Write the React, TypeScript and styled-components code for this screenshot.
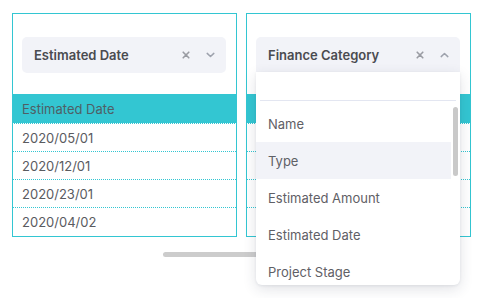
import styled, { createGlobalStyle } from "styled-components";

const GlobalStyle = createGlobalStyle`
  body {
    margin: 0;
    background: #ffffff;
    font-family: Inter, "Noto Sans", sans-serif;
  }
`;

const Page = styled.div`
  position: relative;
  width: 478px;
  height: 298px;
  padding: 13px 0 0 12px;
  box-sizing: border-box;
`;

const Panels = styled.div`
  display: flex;
  gap: 9px;
`;

const Panel = styled.div`
  position: relative;
  width: 225px;
  height: 224px;
  box-sizing: border-box;
  border: 1px solid #33c6d2;
  padding-top: 23px;
  display: flex;
  flex-direction: column;
`;

const Select = styled.div<{ $open?: boolean }>`
  margin: 0 10px 0 9px;
  height: 36px;
  background: #f2f3f8;
  border-radius: ${(p) => (p.$open ? "5px 5px 0 0" : "5px")};
  display: flex;
  align-items: center;
  padding: 0 8px 0 12px;
  gap: 8px;
  box-sizing: border-box;
`;

const SelectLabel = styled.span`
  flex: 1;
  font-size: 13px;
  font-weight: 600;
  color: #4a4b50;
`;

const IconBox = styled.span`
  width: 16px;
  height: 16px;
  display: flex;
  align-items: center;
  justify-content: center;
`;

const Table = styled.div`
  margin-top: 21px;
  display: flex;
  flex-direction: column;
`;

const HeadCell = styled.div`
  height: 29px;
  background: #33c6d2;
  border-bottom: 1px dotted #ffffff;
  display: flex;
  align-items: center;
  padding-left: 9px;
  font-size: 13px;
  color: #4f5f66;
`;

const Cell = styled.div<{ $last?: boolean }>`
  height: 27px;
  border-bottom: ${(p) => (p.$last ? "none" : "1px dotted #33c6d2")};
  display: flex;
  align-items: center;
  padding-left: 9px;
  font-size: 13px;
  color: #5a5b5f;
`;

const HScroll = styled.div`
  margin: 15px 0 0 151px;
  width: 200px;
  height: 5px;
  border-radius: 3px;
  background: #cccccc;
`;

const Dropdown = styled.div`
  position: absolute;
  left: 9px;
  top: 58px;
  width: 204px;
  height: 213px;
  background: #ffffff;
  border-radius: 0 0 6px 6px;
  box-shadow: 0 4px 14px rgba(40, 50, 80, 0.14), 0 1px 3px rgba(40, 50, 80, 0.08);
  overflow: hidden;
  z-index: 2;
`;

const Search = styled.div`
  height: 28px;
  margin: 0 4px;
  border-bottom: 1px solid #e3e6f1;
`;

const List = styled.div`
  position: relative;
  padding: 4px 9px 0 0;
`;

const Option = styled.div<{ $active?: boolean }>`
  height: 37px;
  display: flex;
  align-items: center;
  padding-left: 12px;
  font-size: 13px;
  color: #5f6066;
  background: ${(p) => (p.$active ? "#f2f3f8" : "transparent")};
`;

const Thumb = styled.div`
  position: absolute;
  right: 2px;
  top: 6px;
  width: 5px;
  height: 69px;
  border-radius: 3px;
  background: #c9c9c9;
`;

const Close = () => (
  <IconBox>
    <svg width="8" height="8" viewBox="0 0 8 8">
      <path d="M1.2 1.2L6.8 6.8M6.8 1.2L1.2 6.8" stroke="#9a9ca3" strokeWidth="1.6" strokeLinecap="round" />
    </svg>
  </IconBox>
);

const Chevron = ({ up }: { up?: boolean }) => (
  <IconBox>
    <svg width="9" height="6" viewBox="0 0 9 6">
      <path
        d={up ? "M1.2 4.6L4.5 1.5L7.8 4.6" : "M1.2 1.4L4.5 4.5L7.8 1.4"}
        stroke="#9ea2ad"
        strokeWidth="1.5"
        fill="none"
        strokeLinecap="round"
        strokeLinejoin="round"
      />
    </svg>
  </IconBox>
);

const dates = ["2020/05/01", "2020/12/01", "2020/23/01", "2020/04/02"];
const options = ["Name", "Type", "Estimated Amount", "Estimated Date", "Project Stage"];

export default function App() {
  return (
    <Page>
      <GlobalStyle />
      <Panels>
        <Panel>
          <Select>
            <SelectLabel>Estimated Date</SelectLabel>
            <Close />
            <Chevron />
          </Select>
          <Table>
            <HeadCell>Estimated Date</HeadCell>
            {dates.map((d, i) => (
              <Cell key={d} $last={i === dates.length - 1}>
                {d}
              </Cell>
            ))}
          </Table>
        </Panel>
        <Panel>
          <Select $open>
            <SelectLabel>Finance Category</SelectLabel>
            <Close />
            <Chevron up />
          </Select>
          <Table>
            <HeadCell />
            {dates.map((d, i) => (
              <Cell key={d} $last={i === dates.length - 1} />
            ))}
          </Table>
          <Dropdown>
            <Search />
            <List>
              {options.map((o) => (
                <Option key={o} $active={o === "Type"}>
                  {o}
                </Option>
              ))}
              <Thumb />
            </List>
          </Dropdown>
        </Panel>
      </Panels>
      <HScroll />
    </Page>
  );
}
